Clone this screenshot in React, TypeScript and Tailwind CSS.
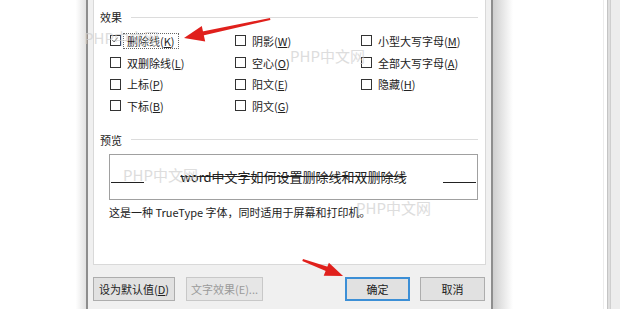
import React from "react";

function Box({ checked = false }: { checked?: boolean }) {
  return (
    <span className="relative w-[11px] h-[11px] border border-[#333333] bg-white shrink-0 block">
      {checked && (
        <svg viewBox="0 0 11 11" className="absolute left-0 top-0 w-[9px] h-[9px]">
          <path d="M1.5 4.8 L3.8 7.2 L8 2" fill="none" stroke="#444" strokeWidth="1.1" />
        </svg>
      )}
    </span>
  );
}

function Opt({ label, k, checked = false, focus = false }: { label: string; k: string; checked?: boolean; focus?: boolean }) {
  return (
    <div className="h-[21.7px] flex items-center">
      <Box checked={checked} />
      <span
        className={
          "ml-[2px] px-[3px] leading-[14px] text-[11px] text-[#222] border border-dotted " +
          (focus ? "border-[#666]" : "border-transparent")
        }
      >
        {label}(<span className="underline underline-offset-1">{k}</span>)
      </span>
    </div>
  );
}

function Header({ text }: { text: string }) {
  return (
    <div className="h-[16px] flex items-center pl-[6px] pr-[7px]">
      <span className="text-[11px] leading-[16px] text-[#222]">{text}</span>
      <span className="flex-1 h-px bg-[#dcdcdc] ml-[9px]" />
    </div>
  );
}

function Btn({ children, primary = false, disabled = false, w }: { children: React.ReactNode; primary?: boolean; disabled?: boolean; w: string }) {
  return (
    <div
      className={
        "h-[24px] flex items-center justify-center text-[11px] " +
        w +
        " " +
        (primary
          ? "border-2 border-[#3c8fd6] bg-[#e1e1e1] text-[#222]"
          : disabled
          ? "border border-[#c8c8c8] bg-[#e6e6e6] text-[#9a9a9a]"
          : "border border-[#adadad] bg-[#e1e1e1] text-[#222]")
      }
    >
      {children}
    </div>
  );
}

export default function App() {
  return (
    <div className="relative w-[620px] h-[309px] bg-white flex overflow-hidden font-['Noto_Sans_CJK_SC','Noto_Sans',sans-serif]">
      <div className="w-[86px] h-full bg-gradient-to-r from-white from-[88%] to-[#e2e2e2]" />
      <div className="w-[407px] h-full border-x-2 border-[#8e8e8e] bg-[#f0f0f0] px-[5px] flex flex-col shrink-0">
        <div className="h-[265px] bg-white border border-t-0 border-[#d9d9d9] pt-[9px] flex flex-col">
          <Header text="效果" />
          <div className="mt-[5px] ml-[16px] grid grid-cols-[125px_126px_1fr]">
            <div>
              <Opt label="删除线" k="K" checked focus />
              <Opt label="双删除线" k="L" />
              <Opt label="上标" k="P" />
              <Opt label="下标" k="B" />
            </div>
            <div>
              <Opt label="阴影" k="W" />
              <Opt label="空心" k="O" />
              <Opt label="阳文" k="E" />
              <Opt label="阴文" k="G" />
            </div>
            <div>
              <Opt label="小型大写字母" k="M" />
              <Opt label="全部大写字母" k="A" />
              <Opt label="隐藏" k="H" />
            </div>
          </div>
          <div className="mt-[15px]">
            <Header text="预览" />
          </div>
          <div className="mt-[6px] ml-[15px] mr-[7px] h-[46px] border border-[#a0a0a0] flex items-start">
            <span className="w-[33px] h-px bg-[#222] ml-px mt-[27px]" />
            <div className="flex-1 flex justify-center mt-[13px]">
              <span className="text-[13px] leading-[18px] text-[#222] line-through decoration-[#222]">
                word中文字如何设置删除线和双删除线
              </span>
            </div>
            <span className="w-[33px] h-px bg-[#222] mr-px mt-[27px]" />
          </div>
          <div className="mt-[4px] ml-[15px] text-[11px] leading-[16px] text-[#222]">
            这是一种 TrueType 字体，同时适用于屏幕和打印机。
          </div>
        </div>
        <div className="pt-[12px] flex">
          <Btn w="w-[82px]">
            设为默认值(<span className="underline underline-offset-1">D</span>)
          </Btn>
          <div className="ml-[11px]">
            <Btn w="w-[77px]" disabled>
              文字效果(E)...
            </Btn>
          </div>
          <div className="flex-1" />
          <Btn w="w-[65px]" primary>
            确定
          </Btn>
          <div className="ml-[10px] mr-[1px]">
            <Btn w="w-[65px]">取消</Btn>
          </div>
        </div>
      </div>
      <div className="w-[20px] h-full bg-gradient-to-r from-[#cfcfcf] to-white" />
      <div className="flex-1" />
      <div className="w-[17px] h-full flex">
        <span className="w-px h-full bg-[#ececec]" />
        <span className="w-[3px]" />
        <span className="w-px h-full bg-[#c4c4c4]" />
        <span className="w-[2px] h-full bg-[#dedede]" />
        <span className="w-px h-full bg-[#cfcfcf]" />
        <span className="flex-1 h-full bg-[#ededed]" />
      </div>

      {/* watermarks */}
      <span className="absolute left-[84px] top-[30px] text-[15px] leading-[16px] text-[#cfcfcf] opacity-70 font-['Noto_Sans_CJK_SC',sans-serif]">PHP中文网</span>
      <span className="absolute left-[290px] top-[48px] text-[15px] leading-[16px] text-[#cfcfcf] opacity-70 font-['Noto_Sans_CJK_SC',sans-serif]">PHP中文网</span>
      <span className="absolute left-[123px] top-[167px] text-[15px] leading-[16px] text-[#cfcfcf] opacity-70 font-['Noto_Sans_CJK_SC',sans-serif]">PHP中文网</span>
      <span className="absolute left-[356px] top-[200px] text-[15px] leading-[16px] text-[#cfcfcf] opacity-70 font-['Noto_Sans_CJK_SC',sans-serif]">PHP中文网</span>

      {/* red arrows */}
      <svg className="absolute left-0 top-0 w-[620px] h-[309px] pointer-events-none" viewBox="0 0 620 309">
        <polygon points="270,18 270.4,20 203,35.5 202.3,31.5" fill="#e0201c" />
        <polygon points="184,38 201.8,25.9 205.2,41.5" fill="#e0201c" />
        <polygon points="303,259 302.3,261 327,271.5 328.5,267" fill="#e0201c" />
        <polygon points="343,276 328.9,262.8 323.7,275.8" fill="#e0201c" />
      </svg>
    </div>
  );
}
